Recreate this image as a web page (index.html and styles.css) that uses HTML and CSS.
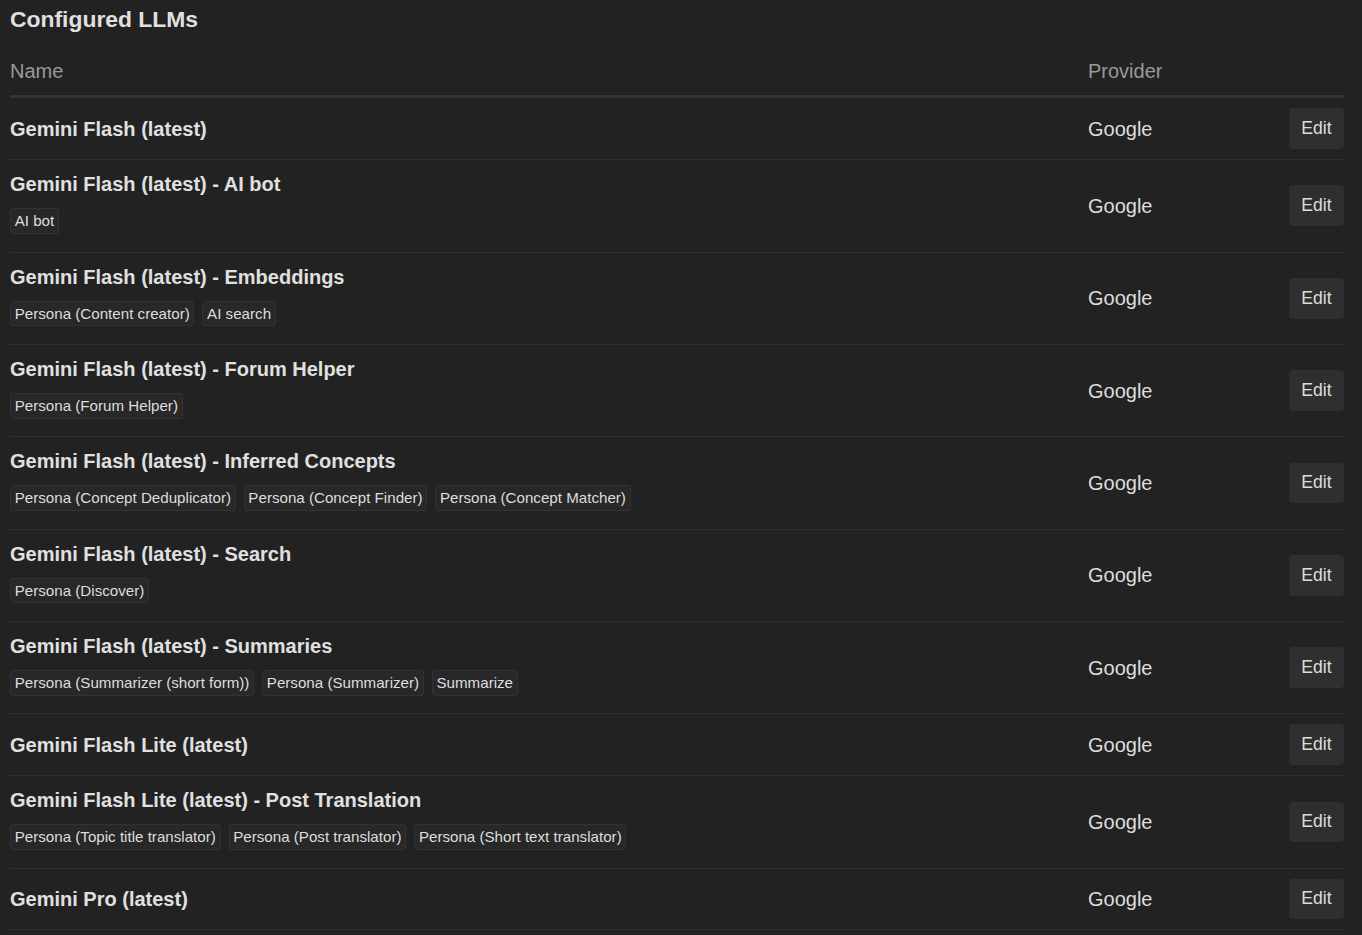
FILE: index.html
```html
<!DOCTYPE html>
<html lang="en">
<head>
<meta charset="utf-8">
<title>Configured LLMs</title>
<link rel="stylesheet" href="styles.css">
</head>
<body>
<div class="page">
  <h2 class="title">Configured LLMs</h2>
  <div class="table">
    <div class="row head">
      <div class="cell">Name</div>
      <div class="cell">Provider</div>
      <div class="cell"></div>
    </div>

    <div class="row">
      <div class="cell name"><div class="llm">Gemini Flash (latest)</div></div>
      <div class="cell provider">Google</div>
      <div class="cell actions"><button class="btn">Edit</button></div>
    </div>

    <div class="row">
      <div class="cell name">
        <div class="llm">Gemini Flash (latest) - AI bot</div>
        <div class="tags"><span class="tag">AI bot</span></div>
      </div>
      <div class="cell provider">Google</div>
      <div class="cell actions"><button class="btn">Edit</button></div>
    </div>

    <div class="row">
      <div class="cell name">
        <div class="llm">Gemini Flash (latest) - Embeddings</div>
        <div class="tags"><span class="tag">Persona (Content creator)</span><span class="tag">AI search</span></div>
      </div>
      <div class="cell provider">Google</div>
      <div class="cell actions"><button class="btn">Edit</button></div>
    </div>

    <div class="row">
      <div class="cell name">
        <div class="llm">Gemini Flash (latest) - Forum Helper</div>
        <div class="tags"><span class="tag">Persona (Forum Helper)</span></div>
      </div>
      <div class="cell provider">Google</div>
      <div class="cell actions"><button class="btn">Edit</button></div>
    </div>

    <div class="row">
      <div class="cell name">
        <div class="llm">Gemini Flash (latest) - Inferred Concepts</div>
        <div class="tags"><span class="tag">Persona (Concept Deduplicator)</span><span class="tag">Persona (Concept Finder)</span><span class="tag">Persona (Concept Matcher)</span></div>
      </div>
      <div class="cell provider">Google</div>
      <div class="cell actions"><button class="btn">Edit</button></div>
    </div>

    <div class="row">
      <div class="cell name">
        <div class="llm">Gemini Flash (latest) - Search</div>
        <div class="tags"><span class="tag">Persona (Discover)</span></div>
      </div>
      <div class="cell provider">Google</div>
      <div class="cell actions"><button class="btn">Edit</button></div>
    </div>

    <div class="row">
      <div class="cell name">
        <div class="llm">Gemini Flash (latest) - Summaries</div>
        <div class="tags"><span class="tag">Persona (Summarizer (short form))</span><span class="tag">Persona (Summarizer)</span><span class="tag">Summarize</span></div>
      </div>
      <div class="cell provider">Google</div>
      <div class="cell actions"><button class="btn">Edit</button></div>
    </div>

    <div class="row">
      <div class="cell name"><div class="llm">Gemini Flash Lite (latest)</div></div>
      <div class="cell provider">Google</div>
      <div class="cell actions"><button class="btn">Edit</button></div>
    </div>

    <div class="row">
      <div class="cell name">
        <div class="llm">Gemini Flash Lite (latest) - Post Translation</div>
        <div class="tags"><span class="tag">Persona (Topic title translator)</span><span class="tag">Persona (Post translator)</span><span class="tag">Persona (Short text translator)</span></div>
      </div>
      <div class="cell provider">Google</div>
      <div class="cell actions"><button class="btn">Edit</button></div>
    </div>

    <div class="row">
      <div class="cell name"><div class="llm">Gemini Pro (latest)</div></div>
      <div class="cell provider">Google</div>
      <div class="cell actions"><button class="btn">Edit</button></div>
    </div>
  </div>
</div>
</body>
</html>
```

FILE: styles.css
```css
html, body {
  margin: 0;
  padding: 0;
  background: #222222;
}

body {
  font-family: "Liberation Sans", Arial, sans-serif;
  color: #dddddd;
  font-size: 20px;
}

.page {
  padding: 6px 18px 0 10px;
}

.title {
  margin: 0 0 14px 0;
  font-size: 22.88px;
  line-height: 1.2;
  font-weight: bold;
  color: #e0e0e0;
}

.table {
  display: flex;
  flex-direction: column;
}

.row {
  display: grid;
  grid-template-columns: 1078px 1fr auto;
  align-items: center;
  border-bottom: 1px solid #303030;
  padding: 10px 0;
}

.row.head {
  border-bottom: 3px solid #343434;
  padding: 10px 0 10px 0;
  color: #999999;
  line-height: 28px;
  font-size: 20px;
}

.cell {
  min-width: 0;
}

.llm {
  font-weight: bold;
  line-height: 28px;
  color: #e0e0e0;
}

.tags {
  display: flex;
  flex-wrap: wrap;
  gap: 8px;
  margin-top: 10px;
  margin-bottom: 7.7px;
}

.tag {
  font-size: 15.15px;
  line-height: 17.7px;
  padding: 3px 3.7px;
  background: #282828;
  border: 1px solid #323232;
  border-radius: 3px;
  color: #dddddd;
}

.provider {
  line-height: 28px;
  color: #dddddd;
}

.actions {
  display: flex;
  justify-content: flex-end;
}

.btn {
  font-family: "Liberation Sans", Arial, sans-serif;
  font-size: 17.6px;
  line-height: 1.2;
  padding: 8.8px 11.44px;
  border: 1px solid transparent;
  border-radius: 4px;
  background: #2f2f2f;
  color: #dddddd;
  cursor: pointer;
}
```
